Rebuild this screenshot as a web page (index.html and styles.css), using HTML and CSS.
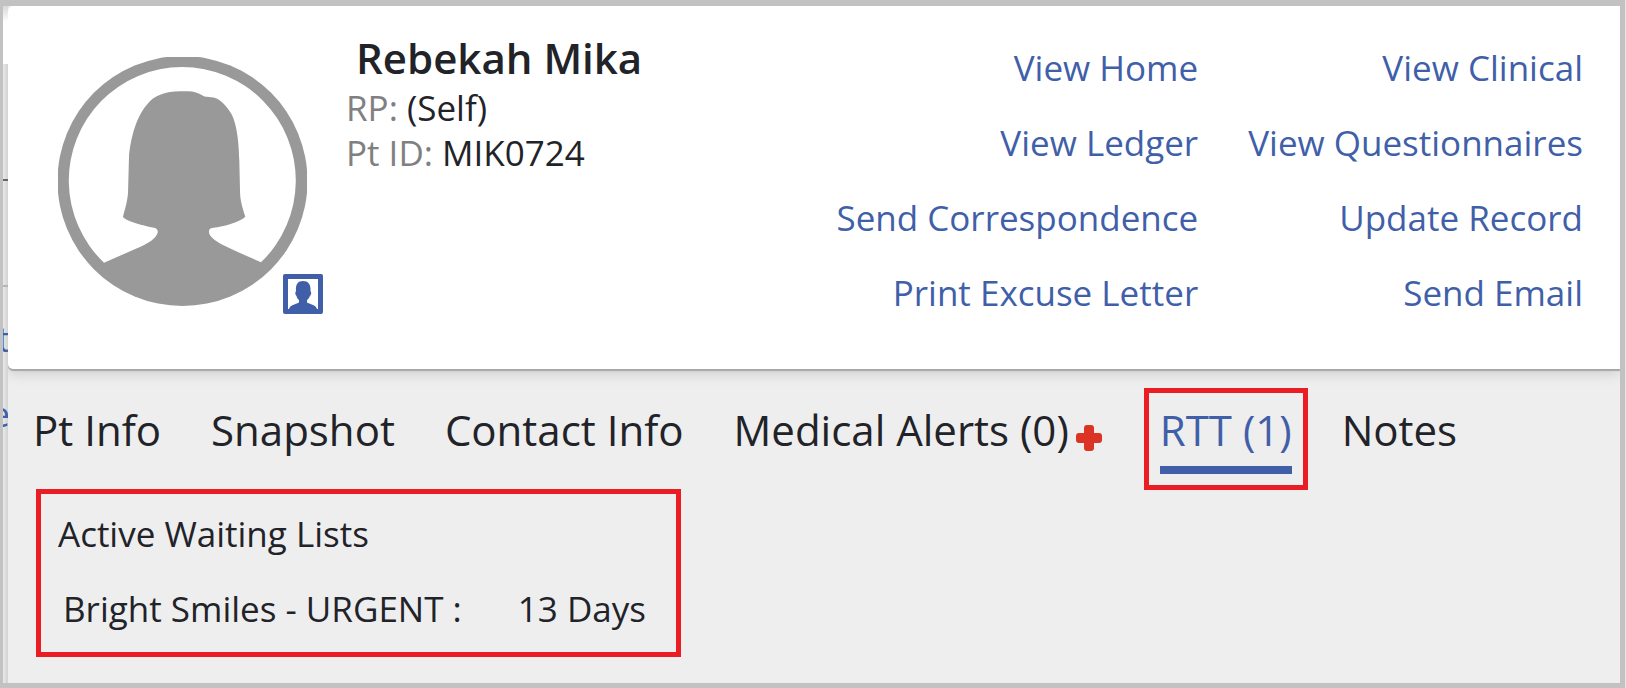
FILE: index.html
```html
<!DOCTYPE html>
<html lang="en">
<head>
  <meta charset="UTF-8">
  <meta name="viewport" content="width=device-width, initial-scale=1.0">
  <title>Rebekah Mika</title>
  <link rel="stylesheet" href="styles.css">
</head>
<body>
  <div class="behind">
    <div class="behind-top"></div>
    <div class="behind-row"></div>
    <div class="behind-row light"></div>
    <div class="behind-text">
      <span>t</span>
      <span>e</span>
    </div>
  </div>

  <main class="panel">
    <header class="card">
      <div class="avatar">
        <svg class="photo" viewBox="0 0 249 249" role="img" aria-label="Patient photo">
          <circle cx="124.5" cy="124" r="125" fill="#999"/>
          <path fill="#fff" d="M46 205.700A113.500 113.500 0 1 1 203 205.300C191 200 177 194 165 188C157 184 151 179 151 175.300C151 172 152 171 155.300 170.700C166 169.500 182 165 187.300 159.700C184 149 182 143 182 133L181.300 103C181 92 180 66 172 54.700C166 46 160 40.500 153 40.300C150 40 148 40 146 39.300C140 36 136 34.300 130 34.300H122C108 34.500 96 38 88.700 48C77 61 72 86 71 99.700L70 136.300C69 146 67 152 65 159.700C66 163 82 168 96 170.700C99 171.300 100 173 99.700 175.500C98 182 90 186 83 189.500Z"/>
        </svg>
        <button class="badge" aria-label="Change photo">
          <svg viewBox="0 0 40 40">
            <rect width="40" height="40" rx="2" fill="#415fa9"/>
            <path fill="#fff" d="M5 5H35V35H34C33 31 28 30.500 24 28.500V26C26 25 26 23 27 22C28.500 20 28.500 19 27.500 17C28 10 25 7 20 7S12.500 10 13 17C12 19 12 20 13.500 22C14 23 14 25 16 26V28.500C12 30.500 7 31 6 35H5Z"/>
          </svg>
        </button>
      </div>

      <div class="info">
        <h1>Rebekah Mika</h1>
        <p><span class="label">RP:</span> (Self)</p>
        <p><span class="label">Pt ID:</span> MIK0724</p>
      </div>

      <nav class="links">
        <a href="#">View Home</a>
        <a href="#">View Clinical</a>
        <a href="#">View Ledger</a>
        <a href="#">View Questionnaires</a>
        <a href="#">Send Correspondence</a>
        <a href="#">Update Record</a>
        <a href="#">Print Excuse Letter</a>
        <a href="#">Send Email</a>
      </nav>
    </header>

    <nav class="tabs">
      <button>Pt Info</button>
      <button>Snapshot</button>
      <button>Contact Info</button>
      <button class="alerts">Medical Alerts (0)
        <svg class="plus" viewBox="0 0 26 26">
          <rect x="8" width="10" height="26" rx="3" fill="#dc3424"/>
          <rect y="8" width="26" height="10" rx="3" fill="#dc3424"/>
        </svg>
      </button>
      <button class="active">RTT (1)</button>
      <button>Notes</button>
    </nav>

    <section class="waiting">
      <h2>Active Waiting Lists</h2>
      <div class="entry">
        <span>Bright Smiles - URGENT :</span>
        <span>13 Days</span>
      </div>
    </section>
  </main>
</body>
</html>
```

FILE: styles.css
```css
* {
  box-sizing: border-box;
}

body {
  margin: 0;
  min-height: 100vh;
  display: flex;
  background-color: #c2c2c2;
  padding: 6px 5px 5px 3px;
  border-right: 1px solid #e6e6e6;
  font-family: "Open Sans", sans-serif;
  font-size: 35px;
  color: #212329;
}

h1, h2, p {
  margin: 0;
}

button {
  font: inherit;
  color: inherit;
  background: none;
  border: none;
  padding: 0;
  cursor: pointer;
}

/* sliver of the page under the panel */
.behind {
  width: 5px;
  overflow: hidden;
  background: linear-gradient(to right, #e9e9e9, #d2d2d2);
  color: #415fa9;
}

.behind-top {
  height: 58px;
  background: linear-gradient(#d8d8d8, #fff 16px);
}

.behind-row {
  height: 117px;
  border-bottom: 2px solid #666;
}

.behind-row.light {
  height: 106px;
  border-color: #b5b5b5;
}

.behind-text {
  display: flex;
  flex-direction: column;
  align-items: flex-end;
  padding-top: 14px;
  margin-right: -2px;
  line-height: 75px;
}

.panel {
  flex: 1;
  min-width: 0;
  background-color: #eee;
}

.card {
  display: flex;
  align-items: flex-start;
  min-height: 363px;
  padding: 24px 37px 24px 50px;
  background-color: #fff;
  border-radius: 5px 0 0 5px;
  box-shadow: 0 2px 1px #a6a8a6, 0 4px 14px rgba(0, 0, 0, 0.15);
  clip-path: inset(0 0 -40px 0);
}

.avatar {
  position: relative;
  width: 249px;
  margin-top: 27px;
}

.photo {
  display: block;
  width: 249px;
}

.badge {
  position: absolute;
  right: -16px;
  bottom: -8px;
  width: 40px;
  height: 40px;
}

.badge svg {
  display: block;
}

.info {
  margin-left: 39px;
  line-height: 45px;
}

.info h1 {
  padding-left: 10px;
  font-size: 42px;
  font-weight: 600;
  line-height: 55px;
}

.label {
  color: #808080;
}

.links {
  display: grid;
  grid-template-columns: auto auto;
  column-gap: 50px;
  margin-left: auto;
  text-align: right;
  line-height: 75px;
}

.links a {
  color: #415fa9;
  text-decoration: none;
}

.links a:hover {
  text-decoration: underline;
}

.tabs {
  display: flex;
  align-items: flex-start;
  gap: 50px;
  padding: 35px 25px 0;
  font-size: 42px;
  line-height: 52px;
  white-space: nowrap;
}

.tabs .alerts {
  display: flex;
  align-items: center;
  gap: 7px;
}

.plus {
  width: 26px;
  height: 26px;
  margin: 16px 8px 0 0;
}

.tabs .active {
  color: #415fa9;
  padding-bottom: 10px;
  border-bottom: 8px solid #415fa9;
  outline: 5px solid #ea1c24;
  outline-offset: 11px;
}

.waiting {
  width: fit-content;
  margin: 15px 28px 26px;
  padding: 2px 30px 6px 17px;
  border: 5px solid #ea1c24;
  line-height: 75px;
}

.waiting h2 {
  font-size: 35px;
  font-weight: 400;
}

.entry {
  display: flex;
  gap: 56px;
  padding-left: 5px;
}
```
